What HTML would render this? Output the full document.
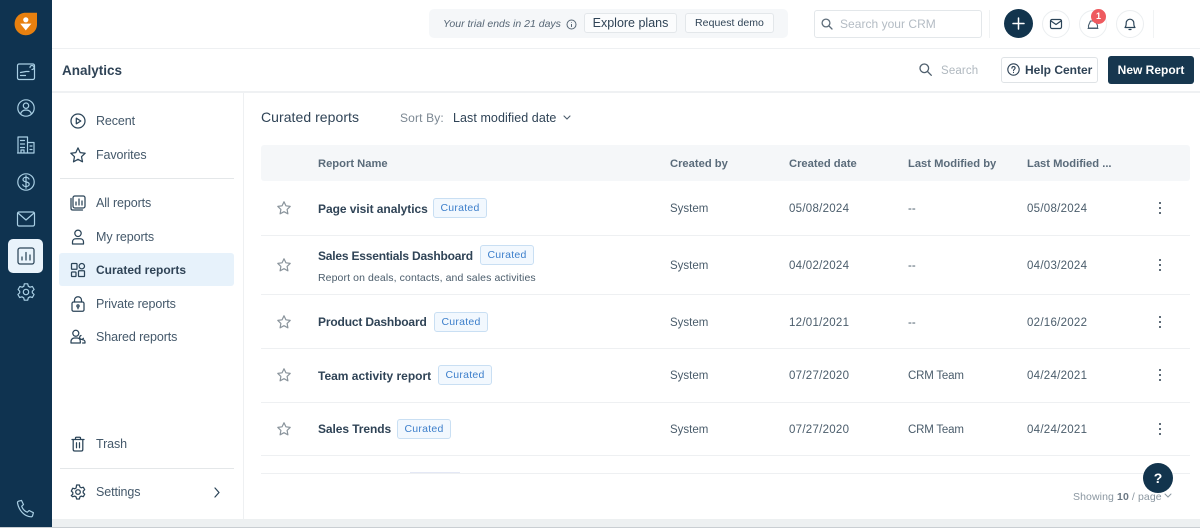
<!DOCTYPE html>
<html lang="en">
<head>
<meta charset="utf-8">
<title>Analytics</title>
<style>
html,body{margin:0;padding:0;width:1200px;height:528px;overflow:hidden;background:#fff}
body{position:relative;font-family:"Liberation Sans",sans-serif;color:#2f4356}
.t{position:absolute;white-space:nowrap;line-height:16px;font-size:12px}
.b{position:absolute}
svg{position:absolute;overflow:visible;fill:none}
.nav{stroke:#a9cfe4;stroke-width:1.2;stroke-linecap:round;stroke-linejoin:round}
.ic{stroke:#2b4458;stroke-width:1.25;stroke-linecap:round;stroke-linejoin:round}
.side{font-size:12.5px;color:#44586a;letter-spacing:-.1px}
.hd{font-size:11.2px;font-weight:bold;color:#5a6b7a;top:156px}
.nm{font-size:12px;font-weight:bold;color:#2f4356;margin-top:1px}
.cell{font-size:11.5px;color:#4a5c6b;margin-top:1px}
.dt{letter-spacing:.27px}
.tag{position:absolute;box-sizing:border-box;height:20px;line-height:19px;border:1px solid #c9dff3;background:#f2f8fe;border-radius:3px;color:#3d7fcb;font-size:10.5px;text-align:center;letter-spacing:.25px}
.ln{position:absolute;left:261px;width:929px;height:1px;background:#eef0f2}
.star{stroke:#8a949c;stroke-width:1.2;stroke-linejoin:round}
.dot{position:absolute;left:1158.7px;width:2.6px;height:2.6px;border-radius:50%;background:#2b3d4d}
.rnd{position:absolute;width:28px;height:28px;box-sizing:border-box;border:1px solid #ebeef0;border-radius:50%;background:#fff}
</style>
</head>
<body>
<!-- left rail -->
<div class="b" style="left:0;top:0;width:52px;height:527px;background:#0f3350"></div>
<svg style="left:14px;top:12px" width="24" height="24" viewBox="0 0 24 24"><path d="M11.5 .8H23v11.5C23 18.7 18 23.2 11.8 23.2 5.5 23.2.6 18.2.6 12 .6 5.8 5.3.8 11.5.8z" fill="#e8800f"/><circle cx="11.8" cy="7.8" r="2.6" fill="#fff"/><path d="M6.2 11.6h11.2L11.8 18.4z" fill="#fff"/></svg>
<!-- rail icons -->
<svg class="nav" style="left:16px;top:62px" width="20" height="20" viewBox="0 0 20 20"><rect x="1.5" y="2" width="17" height="15.5" rx="1.6"/><path d="M4.5 13.5h5M4.5 10.5 10 9.5h3M14 5.5a2 2 0 1 1 2 2"/></svg>
<svg class="nav" style="left:16px;top:98px" width="20" height="20" viewBox="0 0 20 20"><circle cx="10" cy="10" r="8.2"/><circle cx="10" cy="7.7" r="2.7"/><path d="M4.7 15.8c.6-2.6 2.5-3.8 5.3-3.8s4.7 1.2 5.3 3.8"/></svg>
<svg class="nav" style="left:16px;top:135px" width="20" height="20" viewBox="0 0 20 20"><path d="M2 18V2h9.500v16M11.500 7.500h6.500V18H1.500M4.500 5.500h4M4.500 9h4M4.500 12.500h4M5 18v-3h3v3M14 11h2M14 14.500h2"/></svg>
<svg class="nav" style="left:16px;top:172px" width="20" height="20" viewBox="0 0 20 20"><circle cx="10" cy="10" r="8.2"/><path d="M13 7c-.6-1.200-1.700-1.700-3-1.700-1.700 0-3 .9-3 2.300 0 3.100 6.200 1.500 6.200 4.500 0 1.400-1.400 2.400-3.200 2.400-1.500 0-2.700-.6-3.200-1.800M10 3.800v12.400"/></svg>
<svg class="nav" style="left:16px;top:209px" width="20" height="20" viewBox="0 0 20 20"><rect x="1.500" y="3" width="17" height="14" rx="1.500"/><path d="M2 4l8 7 8-7"/></svg>
<div class="b" style="left:8px;top:239px;width:35px;height:34px;background:#e9f3fb;border-radius:5px"></div>
<svg class="ic" style="left:16px;top:246px" width="20" height="20" viewBox="0 0 20 20"><rect x="2" y="2" width="16" height="16" rx="2"/><path d="M6 14v-3M10 14V6.500M14 14V9"/></svg>
<svg class="nav" style="left:16px;top:282px" width="20" height="20" viewBox="0 0 20 20"><path d="M8.300 1.800h3.400l.6 2.400 1.700 1 2.400-.7 1.700 3-1.800 1.700v1.600l1.800 1.700-1.700 3-2.400-.7-1.700 1-.6 2.400H8.300l-.6-2.400-1.700-1-2.400.7-1.700-3 1.800-1.700V9.200L2.100 7.500l1.700-3 2.400.7 1.700-1z"/><circle cx="10" cy="10" r="2.700"/></svg>
<svg class="nav" style="left:16px;top:499px" width="20" height="20" viewBox="0 0 20 20"><path d="M2.500 2.200l3-.8 2 4.200-1.800 1.600c.8 2.600 3 5 5.600 6l1.800-1.700 4.300 2.200-.8 3c-.2.700-.9 1.200-1.700 1.100C8.500 17.300 2.800 11.500 1.500 4c-.1-.800.3-1.500 1-1.800z"/></svg>

<!-- top bar -->
<div class="b" style="left:52px;top:48px;width:1148px;height:1px;background:#eef0f2"></div>
<div class="b" style="left:429px;top:9px;width:359px;height:29px;background:#f5f7f9;border-radius:5px"></div>
<div class="t" style="left:443px;top:16px;font-size:10.500px;font-style:italic;color:#566675">Your trial ends in 21 days</div>
<svg style="left:566px;top:19px;stroke:#566675;stroke-width:1" width="11" height="11" viewBox="0 0 11 11"><circle cx="5.500" cy="5.500" r="4.500"/><path d="M5.500 5v3M5.500 3v.6"/></svg>
<div class="b" style="left:584px;top:13px;width:93px;height:20px;box-sizing:border-box;background:#fbfcfd;border:1px solid #e3e7ea;border-radius:3px;text-align:center;font-size:12.500px;line-height:19px;color:#2f4356">Explore plans</div>
<div class="b" style="left:685px;top:13px;width:89px;height:20px;box-sizing:border-box;background:#fbfcfd;border:1px solid #e3e7ea;border-radius:3px;text-align:center;font-size:10.500px;line-height:19px;color:#2f4356;letter-spacing:.05px">Request demo</div>
<div class="b" style="left:814px;top:10px;width:168px;height:28px;box-sizing:border-box;border:1px solid #e3e7ea;border-radius:3px;background:#fff"></div>
<svg style="left:821px;top:18px;stroke:#5c6b78;stroke-width:1.300;stroke-linecap:round" width="12" height="12" viewBox="0 0 12 12"><circle cx="5" cy="5" r="3.900"/><path d="M8 8l3 3"/></svg>
<div class="t" style="left:840px;top:16px;font-size:12px;color:#b4bcc4;letter-spacing:.03px">Search your CRM</div>
<div class="b" style="left:989px;top:10px;width:1px;height:28px;background:#f1f3f4"></div>
<div class="b" style="left:1004px;top:9px;width:29px;height:29px;border-radius:50%;background:#12344d"></div>
<svg style="left:1012px;top:17px;stroke:#fff;stroke-width:1.500;stroke-linecap:round" width="13" height="13" viewBox="0 0 13 13"><path d="M6.500 1v11M1 6.500h11"/></svg>
<div class="rnd" style="left:1042px;top:10px"></div>
<svg class="ic" style="left:1050px;top:18px;stroke-width:1.200" width="12" height="12" viewBox="0 0 12 12"><rect x=".5" y="1.500" width="11" height="9" rx="1.500"/><path d="M1 3l5 3.500L11 3"/></svg>
<div class="rnd" style="left:1079px;top:10px"></div>
<svg class="ic" style="left:1087px;top:20px;stroke-width:1.100;stroke:#4a5f70" width="12" height="10" viewBox="0 0 12 10"><path d="M1.500 8V5.500L3.500 1h5l2 4.500V8zM1 8.500h10"/></svg>
<div class="b" style="left:1091px;top:9px;width:15px;height:15px;border-radius:50%;background:#ee5a5f;color:#fff;font-size:9px;line-height:15px;text-align:center;font-weight:bold">1</div>
<div class="rnd" style="left:1116px;top:10px"></div>
<svg class="ic" style="left:1124px;top:17px;stroke-width:1.200" width="12" height="14" viewBox="0 0 12 14"><path d="M1 10.500c1-1 1.200-2 1.200-4.500a3.800 3.800 0 0 1 7.600 0c0 2.500.2 3.500 1.200 4.500zM5 12.500h2"/></svg>
<div class="b" style="left:1153px;top:10px;width:1px;height:28px;background:#f1f3f4"></div>

<!-- analytics bar -->
<div class="t" style="left:62px;top:63px;font-size:13.500px;font-weight:bold;color:#2f4356">Analytics</div>
<div class="b" style="left:52px;top:91px;width:1148px;height:2px;background:#eff1f3"></div>
<svg style="left:919px;top:63px;stroke:#4f5f6d;stroke-width:1.300;stroke-linecap:round" width="13" height="13" viewBox="0 0 13 13"><circle cx="5.300" cy="5.300" r="4.300"/><path d="M8.500 8.500l3.800 3.800"/></svg>
<div class="t" style="left:941px;top:63px;font-size:11.500px;color:#b0b8bf;letter-spacing:.15px">Search</div>
<div class="b" style="left:1001px;top:57px;width:97px;height:26px;box-sizing:border-box;border:1px solid #dfe3e6;border-radius:3px;background:#fff"></div>
<svg style="left:1007px;top:63px;stroke:#2f4356;stroke-width:1.100;stroke-linecap:round" width="13" height="13" viewBox="0 0 13 13"><circle cx="6.500" cy="6.500" r="5.700"/><path d="M4.900 5.200c0-1 .7-1.600 1.600-1.600s1.600.6 1.600 1.500c0 1.200-1.600 1.200-1.600 2.500M6.500 9.300v.3"/></svg>
<div class="t" style="left:1025px;top:62px;font-size:12px;font-weight:bold;color:#2f4356">Help Center</div>
<div class="b" style="left:1108px;top:56px;width:86px;height:28px;background:#17374f;border-radius:3px;color:#fff;font-size:12px;font-weight:bold;line-height:29px;text-align:center">New Report</div>

<!-- sidebar -->
<div class="b" style="left:243px;top:93px;width:1px;height:426px;background:#eef0f2"></div>
<svg class="ic" style="left:70px;top:113px" width="16" height="16" viewBox="0 0 16 16"><circle cx="8" cy="8" r="7"/><path d="M6.300 5.200v5.600L10.800 8z"/></svg>
<div class="t side" style="left:96px;top:113px">Recent</div>
<svg class="ic" style="left:70px;top:147px" width="16" height="16" viewBox="0 0 16 16"><path d="M8 .9l2.200 4.700 5 .6-3.700 3.500 1 5.100L8 12.300l-4.500 2.500 1-5.100L.8 6.200l5-.6z"/></svg>
<div class="t side" style="left:96px;top:147px">Favorites</div>
<div class="b" style="left:60px;top:178px;width:174px;height:1px;background:#e4e7e9"></div>
<svg class="ic" style="left:70px;top:195px" width="16" height="16" viewBox="0 0 16 16"><rect x="3" y="1" width="12" height="12" rx="1.800"/><path d="M1 3.500v9.700C1 14.300 1.800 15 2.800 15h9.700M6 10V7M9 10V4M12 10V6"/></svg>
<div class="t side" style="left:96px;top:195px">All reports</div>
<svg class="ic" style="left:70px;top:229px" width="16" height="16" viewBox="0 0 16 16"><circle cx="8" cy="4.300" r="3.200"/><path d="M2.500 15v-2c0-2 1.500-3.300 3.400-3.300h4.200c1.900 0 3.400 1.300 3.400 3.300v2z"/></svg>
<div class="t side" style="left:96px;top:229px">My reports</div>
<div class="b" style="left:59px;top:253px;width:175px;height:33px;background:#e7f2fb;border-radius:3px"></div>
<svg class="ic" style="left:70px;top:262px" width="16" height="16" viewBox="0 0 16 16"><rect x="1.500" y="1.500" width="5.500" height="5.800" rx=".8"/><circle cx="11.800" cy="4.200" r="2.700"/><rect x="1.500" y="10" width="4.500" height="4.500" rx=".8"/><rect x="8.500" y="8.800" width="6" height="5.700" rx=".8"/></svg>
<div class="t side" style="left:96px;top:262px;font-size:12px;letter-spacing:0;font-weight:bold;color:#2f4356">Curated reports</div>
<svg class="ic" style="left:70px;top:296px" width="16" height="16" viewBox="0 0 16 16"><rect x="2" y="6" width="12" height="9.200" rx="1.500"/><path d="M4.500 6V4.200a3.500 3.500 0 0 1 7 0V6M8 11v1.800"/><circle cx="8" cy="10" r="1.100"/></svg>
<div class="t side" style="left:96px;top:296px">Private reports</div>
<svg class="ic" style="left:70px;top:329px" width="16" height="16" viewBox="0 0 16 16"><circle cx="5.800" cy="4.300" r="3"/><path d="M1 14v-1.500C1 10.500 2.500 9 4.500 9h2.600c2 0 3.200 1.300 3.200 3.300V14zM11 6.500a2 2 0 1 0 2.400 2.800M12.500 10.800c1.500 0 2.500 1 2.500 2.200V14h-2.400"/></svg>
<div class="t side" style="left:96px;top:329px">Shared reports</div>
<svg class="ic" style="left:70px;top:436px" width="16" height="16" viewBox="0 0 16 16"><path d="M2 3.500h12M5.500 3.500V2c0-.5.400-.8.800-.8h3.400c.4 0 .8.300.8.800v1.500M3.200 3.500v10c0 .9.600 1.500 1.500 1.500h6.600c.9 0 1.500-.6 1.500-1.500v-10M6.500 6.800v5M9.500 6.800v5"/></svg>
<div class="t side" style="left:96px;top:436px">Trash</div>
<div class="b" style="left:60px;top:468px;width:174px;height:1px;background:#e4e7e9"></div>
<svg class="ic" style="left:70px;top:484px" width="16" height="16" viewBox="0 0 16 16"><path d="M6.600 1h2.800l.5 2 1.400.8 2-.6 1.400 2.500-1.500 1.400v1.700l1.500 1.400-1.400 2.500-2-.6-1.400.8-.5 2.100H6.600l-.5-2.100-1.400-.8-2 .6L1.300 11.600l1.500-1.400V8.500L1.300 7.100 2.700 4.200l2 .6 1.400-.8z"/><circle cx="8" cy="8" r="2.300"/></svg>
<div class="t side" style="left:96px;top:484px">Settings</div>
<svg class="ic" style="left:213px;top:487px" width="8" height="11" viewBox="0 0 8 11"><path d="M2 1l4 4.500L2 10"/></svg>

<!-- content head -->
<div class="t" style="left:261px;top:109px;font-size:14px;color:#2f4356;letter-spacing:.05px">Curated reports</div>
<div class="t" style="left:400px;top:110px;font-size:12px;color:#7b8792;letter-spacing:.15px">Sort By:</div>
<div class="t" style="left:453px;top:110px;font-size:12.500px;color:#2f4356;letter-spacing:.07px">Last modified date</div>
<svg style="left:563px;top:115px;stroke:#4a5c6b;stroke-width:1.100;stroke-linecap:round" width="8" height="6" viewBox="0 0 8 6"><path d="M1 1l3 3 3-3"/></svg>

<!-- table header -->
<div class="b" style="left:261px;top:145px;width:929px;height:36px;background:#f5f7f9;border-radius:3px"></div>
<div class="t hd" style="left:318px">Report Name</div>
<div class="t hd" style="left:670px">Created by</div>
<div class="t hd" style="left:789px">Created date</div>
<div class="t hd" style="left:908px">Last Modified by</div>
<div class="t hd" style="left:1027px">Last Modified ...</div>

<!-- row 1 -->
<svg class="star" style="left:277px;top:201px" width="14" height="14" viewBox="0 0 14 14"><path d="M7 .8l1.900 4 4.300.6-3.100 3 .8 4.400L7 10.700l-3.900 2.100.8-4.400-3.100-3 4.300-.6z"/></svg>
<div class="t nm" style="left:318px;top:200px;letter-spacing:-.05px">Page visit analytics</div>
<div class="tag" style="left:433px;top:198px;width:54px">Curated</div>
<div class="t cell" style="left:670px;top:200px">System</div>
<div class="t cell dt" style="left:789px;top:200px">05/08/2024</div>
<div class="t cell" style="left:908px;top:200px">--</div>
<div class="t cell dt" style="left:1027px;top:200px">05/08/2024</div>
<div class="dot" style="top:201.500px"></div><div class="dot" style="top:206.500px"></div><div class="dot" style="top:211.500px"></div>
<div class="ln" style="top:235px"></div>

<!-- row 2 -->
<svg class="star" style="left:277px;top:258px" width="14" height="14" viewBox="0 0 14 14"><path d="M7 .8l1.900 4 4.300.6-3.100 3 .8 4.400L7 10.700l-3.900 2.100.8-4.400-3.100-3 4.300-.6z"/></svg>
<div class="t nm" style="left:318px;top:247px;letter-spacing:-.2px">Sales Essentials Dashboard</div>
<div class="tag" style="left:480px;top:245px;width:54px">Curated</div>
<div class="t" style="left:318px;top:270px;font-size:10.500px;color:#4a5c6b;letter-spacing:.1px">Report on deals, contacts, and sales activities</div>
<div class="t cell" style="left:670px;top:257px">System</div>
<div class="t cell dt" style="left:789px;top:257px">04/02/2024</div>
<div class="t cell" style="left:908px;top:257px">--</div>
<div class="t cell dt" style="left:1027px;top:257px">04/03/2024</div>
<div class="dot" style="top:258.500px"></div><div class="dot" style="top:263.500px"></div><div class="dot" style="top:268.500px"></div>
<div class="ln" style="top:294px"></div>

<!-- row 3 -->
<svg class="star" style="left:277px;top:315px" width="14" height="14" viewBox="0 0 14 14"><path d="M7 .8l1.900 4 4.300.6-3.100 3 .8 4.400L7 10.700l-3.900 2.100.8-4.400-3.100-3 4.300-.6z"/></svg>
<div class="t nm" style="left:318px;top:313px;letter-spacing:-.16px">Product Dashboard</div>
<div class="tag" style="left:434px;top:312px;width:54px">Curated</div>
<div class="t cell" style="left:670px;top:314px">System</div>
<div class="t cell dt" style="left:789px;top:314px">12/01/2021</div>
<div class="t cell" style="left:908px;top:314px">--</div>
<div class="t cell dt" style="left:1027px;top:314px">02/16/2022</div>
<div class="dot" style="top:315.500px"></div><div class="dot" style="top:320.500px"></div><div class="dot" style="top:325.500px"></div>
<div class="ln" style="top:348px"></div>

<!-- row 4 -->
<svg class="star" style="left:277px;top:368px" width="14" height="14" viewBox="0 0 14 14"><path d="M7 .8l1.900 4 4.300.6-3.100 3 .8 4.400L7 10.700l-3.900 2.100.8-4.400-3.100-3 4.300-.6z"/></svg>
<div class="t nm" style="left:318px;top:367px">Team activity report</div>
<div class="tag" style="left:438px;top:365px;width:54px">Curated</div>
<div class="t cell" style="left:670px;top:367px">System</div>
<div class="t cell dt" style="left:789px;top:367px">07/27/2020</div>
<div class="t cell" style="left:908px;top:367px;letter-spacing:-.2px">CRM Team</div>
<div class="t cell dt" style="left:1027px;top:367px">04/24/2021</div>
<div class="dot" style="top:368.500px"></div><div class="dot" style="top:373.500px"></div><div class="dot" style="top:378.500px"></div>
<div class="ln" style="top:402px"></div>

<!-- row 5 -->
<svg class="star" style="left:277px;top:422px" width="14" height="14" viewBox="0 0 14 14"><path d="M7 .8l1.900 4 4.300.6-3.100 3 .8 4.400L7 10.700l-3.900 2.100.8-4.400-3.100-3 4.300-.6z"/></svg>
<div class="t nm" style="left:318px;top:420px;letter-spacing:-.08px">Sales Trends</div>
<div class="tag" style="left:397px;top:419px;width:54px">Curated</div>
<div class="t cell" style="left:670px;top:421px">System</div>
<div class="t cell dt" style="left:789px;top:421px">07/27/2020</div>
<div class="t cell" style="left:908px;top:421px;letter-spacing:-.2px">CRM Team</div>
<div class="t cell dt" style="left:1027px;top:421px">04/24/2021</div>
<div class="dot" style="top:422.500px"></div><div class="dot" style="top:427.500px"></div><div class="dot" style="top:432.500px"></div>
<div class="ln" style="top:455px"></div>
<div class="ln" style="top:473px"></div>
<div class="b" style="left:410px;top:472px;width:50px;height:1px;background:#e4e8f5"></div>

<!-- footer -->
<div class="t" style="left:1073px;top:489px;font-size:10.500px;color:#8b97a1;letter-spacing:.1px">Showing <b style="color:#6b7884">10</b> / page</div>
<svg style="left:1164px;top:493px;stroke:#8b97a1;stroke-width:1;stroke-linecap:round" width="8" height="6" viewBox="0 0 8 6"><path d="M1 1l3 3 3-3"/></svg>
<div class="b" style="left:1143px;top:463px;width:30px;height:30px;border-radius:50%;background:#12344d;color:#fff;font-size:14px;font-weight:bold;line-height:30px;text-align:center">?</div>

<div class="b" style="left:0;top:519px;width:1200px;height:8px;background:#edf0f1"></div>
<div class="b" style="left:0;top:519px;width:52px;height:8px;background:#0f3350"></div>
<div class="b" style="left:0;top:527px;width:1200px;height:1px;background:#c9ced2"></div>
</body>
</html>
